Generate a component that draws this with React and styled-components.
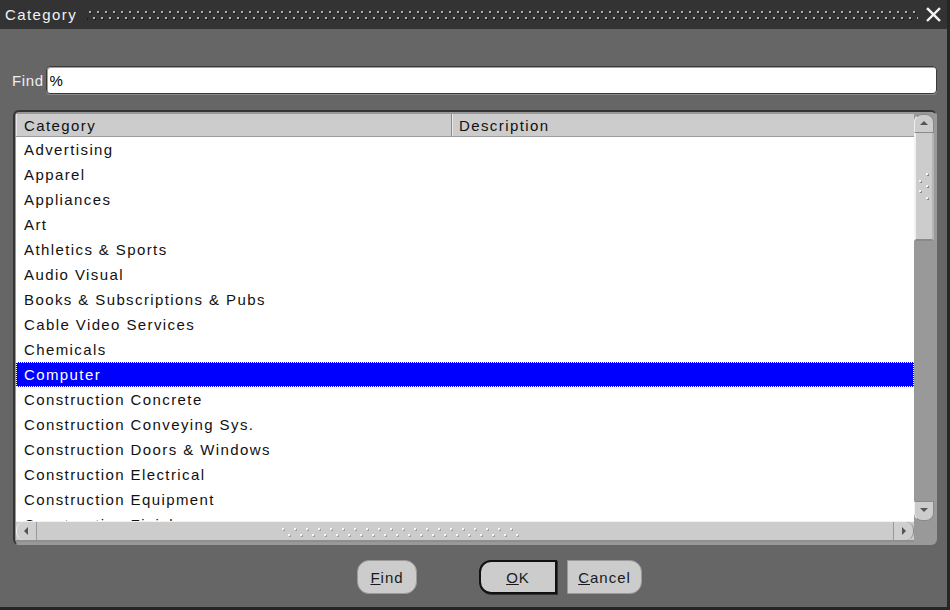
import styled, { createGlobalStyle } from 'styled-components';

const GlobalStyle = createGlobalStyle`
  html, body {
    margin:0;
    padding:0;
    background:#666666;
  }
  body {
    font-family:"Liberation Sans", Arial, sans-serif;
  }
`;

const Window = styled.div`
  width:950px;
  height:610px;
  box-sizing:border-box;
  display:flex;
  flex-direction:column;
  background:#666666;
  border-right:3px solid #262626;
  border-bottom:3px solid #262626;
  font-size:15px;
  letter-spacing:1.4px;
  color:#111111;
`;

const TitleBar = styled.div`
  height:29px;
  flex-shrink:0;
  display:flex;
  align-items:center;
  background:#333333;
  color:#f2f2f2;
  padding:0 6px 0 5px;
`;

// two offset rows of raised dots, each a light pixel with a dark one under it
const Grip = styled.div`
  flex:1;
  height:${p => p.$h || 14}px;
  background-image:
    radial-gradient(circle at 3px 3px, ${p => p.$dot || '#b0b0b0'} 1px, transparent 1.5px),
    radial-gradient(circle at 3px 3px, ${p => p.$dot || '#b0b0b0'} 1px, transparent 1.5px),
    radial-gradient(circle at 4px 4px, ${p => p.$shade || '#1a1a1a'} 1px, transparent 1.5px),
    radial-gradient(circle at 4px 4px, ${p => p.$shade || '#1a1a1a'} 1px, transparent 1.5px);
  background-size:${p => p.$step || 8}px ${p => p.$h || 14}px;
  background-position:
    0 1px, ${p => (p.$step || 8) / 2}px 7px,
    0 1px, ${p => (p.$step || 8) / 2}px 7px;
  background-repeat:repeat-x;
`;

const TitleGrip = styled(Grip)`
  margin:0 8px 0 10px;
`;

const CloseIcon = styled.svg`
  width:15px;
  height:15px;
  flex-shrink:0;
`;

const FindRow = styled.div`
  display:flex;
  align-items:center;
  gap:2px;
  margin:37px 10px 0 12px;
`;

const FindLabel = styled.span`
  color:#eeeeee;
  letter-spacing:0.6px;
`;

const FindInput = styled.input`
  flex:1;
  height:28px;
  box-sizing:border-box;
  background:#ffffff;
  border:1px solid #3a3a3a;
  border-radius:4px;
  box-shadow:inset 1px 1px 0 #a0a0a0, 0 1px 0 #8a8a8a;
  padding:0 0 0 3px;
  font:inherit;
  letter-spacing:inherit;
  color:#000000;
  outline:none;
`;

const Panel = styled.div`
  margin:16px 10px 0 13px;
  height:435px;
  box-sizing:border-box;
  border-top:2px solid #343434;
  border-left:2px solid #343434;
  border-right:1px solid #9a9a9a;
  border-bottom:1px solid #9a9a9a;
  border-radius:6px;
  padding:2px 2px 2px 1px;
  background:#999999;
  display:grid;
  grid-template-columns:1fr 20px;
  grid-template-rows:1fr 21px;
`;

const ListArea = styled.div`
  background:#ffffff;
  overflow:hidden;
  display:flex;
  flex-direction:column;
`;

const HeaderRow = styled.div`
  display:flex;
  height:23px;
  flex-shrink:0;
  background:#cccccc;
  border-bottom:1px solid #9c9c9c;
  box-sizing:border-box;
`;

const HeaderCell = styled.div`
  width:${p => p.$w ? `${p.$w}px` : 'auto'};
  flex:${p => p.$w ? 'none' : 1};
  box-sizing:border-box;
  display:flex;
  align-items:center;
  padding-left:${p => p.$pad}px;
  border-left:1px solid #e8e8e8;
  border-right:${p => p.$w ? '1px solid #8c8c8c' : 'none'};
`;

const Row = styled.div`
  height:25px;
  flex-shrink:0;
  box-sizing:border-box;
  display:flex;
  align-items:center;
  padding-left:7px;
  white-space:nowrap;
  background:${p => p.$selected ? '#0000ff' : 'transparent'};
  color:${p => p.$selected ? '#ffffff' : '#111111'};
  border:1px dotted ${p => p.$selected ? '#ffffff' : 'transparent'};
`;

const VScroll = styled.div`
  display:flex;
  flex-direction:column;
  background:#999999;
`;

const VButton = styled.div`
  height:${p => p.$h}px;
  flex-shrink:0;
  background:#cccccc;
  border:1px solid #8a8a8a;
  border-left-color:#f0f0f0;
  border-radius:${p => p.$up ? '8px 8px 0 0' : '0 0 8px 8px'};
  box-sizing:border-box;
  display:flex;
  align-items:center;
  justify-content:center;
`;

const VThumb = styled.div`
  height:108px;
  flex-shrink:0;
  background:#cccccc;
  border-left:2px solid #f2f2f2;
  border-right:2px solid #b5b5b5;
  border-bottom:2px solid #8a8a8a;
  box-sizing:border-box;
  display:flex;
  align-items:center;
  justify-content:center;
`;

const VTrack = styled.div`
  flex:1;
`;

const HScroll = styled.div`
  display:flex;
  background:#cccccc;
  border-top:1px solid #f2f2f2;
  border-bottom:2px solid #8f8f8f;
  box-sizing:border-box;
`;

const HButton = styled.div`
  width:21px;
  flex-shrink:0;
  display:flex;
  align-items:center;
  justify-content:center;
  background:#cfcfcf;
  border-radius:${p => p.$left ? '8px 0 0 8px' : '0 8px 8px 0'};
  border-left:${p => p.$left ? '1px solid #f4f4f4' : '1px solid #999999'};
  border-right:${p => p.$left ? '1px solid #999999' : '1px solid #8a8a8a'};
  box-sizing:border-box;
`;

const HTrack = styled.div`
  flex:1;
  display:flex;
  align-items:center;
  padding-left:243px;
`;

const HGrip = styled(Grip)`
  flex:none;
  width:240px;
`;

const Corner = styled.div`
  background:#999999;
`;

const ButtonBar = styled.div`
  display:flex;
  align-items:center;
  margin-top:15px;
  padding-left:357px;
`;

const Button = styled.button`
  height:34px;
  width:${p => p.$w}px;
  box-sizing:border-box;
  background:#cccccc;
  font:inherit;
  letter-spacing:1px;
  color:#1a1a1a;
  padding:0;
  margin-left:${p => p.$gap || 0}px;
  border:${p => p.$focus ? '2px solid #111111' : '1px solid #9a9a9a'};
  border-radius:${p => p.$radius};
  box-shadow:${p => p.$focus ? '1px 1px 0 #333333' : 'none'};
  cursor:pointer;
`;

const Mnemonic = styled.span`
  text-decoration:underline;
`;

const items = [
  'Advertising',
  'Apparel',
  'Appliances',
  'Art',
  'Athletics & Sports',
  'Audio Visual',
  'Books & Subscriptions & Pubs',
  'Cable Video Services',
  'Chemicals',
  'Computer',
  'Construction Concrete',
  'Construction Conveying Sys.',
  'Construction Doors & Windows',
  'Construction Electrical',
  'Construction Equipment',
  'Construction Finishes',
];

function Arrow({ dir }) {
  const pts = {
    up: '1,6 5,2 9,6',
    down: '1,2 5,6 9,2',
    left: '6,1 2,5 6,9',
    right: '3,1 7,5 3,9',
  }[dir];
  return (
    <svg width="10" height="10" viewBox="0 0 10 10">
      <polygon points={pts} fill="#555555" />
    </svg>
  );
}

function VGripDots() {
  const dots = [[8, 1], [1, 8], [8, 13], [1, 18], [8, 25]];
  return (
    <svg width="12" height="28" viewBox="0 0 12 28">
      {dots.map(([x, y], i) => (
        <g key={i}>
          <rect x={x + 1} y={y + 1} width="2" height="2" fill="#8a8a8a" />
          <rect x={x} y={y} width="2" height="2" fill="#f4f4f4" />
        </g>
      ))}
    </svg>
  );
}

export default function App() {
  return (
    <>
      <GlobalStyle />
      <Window>
        <TitleBar>
          <span>Category</span>
          <TitleGrip />
          <CloseIcon viewBox="0 0 16 16">
            <path d="M2 2 L14 14 M14 2 L2 14" stroke="#f4f4f4" strokeWidth="2.6" strokeLinecap="square" />
          </CloseIcon>
        </TitleBar>

        <FindRow>
          <FindLabel>Find</FindLabel>
          <FindInput defaultValue="%" readOnly />
        </FindRow>

        <Panel>
          <ListArea>
            <HeaderRow>
              <HeaderCell $w={436} $pad={7}>Category</HeaderCell>
              <HeaderCell $pad={6}>Description</HeaderCell>
            </HeaderRow>
            {items.map(name => (
              <Row key={name} $selected={name === 'Computer'}>{name}</Row>
            ))}
          </ListArea>

          <VScroll>
            <VButton $up $h={19}><Arrow dir="up" /></VButton>
            <VThumb><VGripDots /></VThumb>
            <VTrack />
            <VButton $h={20}><Arrow dir="down" /></VButton>
          </VScroll>

          <HScroll>
            <HButton $left><Arrow dir="left" /></HButton>
            <HTrack>
              <HGrip $step={12} $h={13} $dot="#f6f6f6" $shade="#a0a0a0" />
            </HTrack>
            <HButton><Arrow dir="right" /></HButton>
          </HScroll>
          <Corner />
        </Panel>

        <ButtonBar>
          <Button $w={60} $radius="12px">
            <Mnemonic>F</Mnemonic>ind
          </Button>
          <Button $w={78} $gap={62} $focus $radius="12px 0 0 12px">
            <Mnemonic>O</Mnemonic>K
          </Button>
          <Button $w={75} $gap={10} $radius="0 12px 12px 0">
            <Mnemonic>C</Mnemonic>ancel
          </Button>
        </ButtonBar>
      </Window>
    </>
  );
}
